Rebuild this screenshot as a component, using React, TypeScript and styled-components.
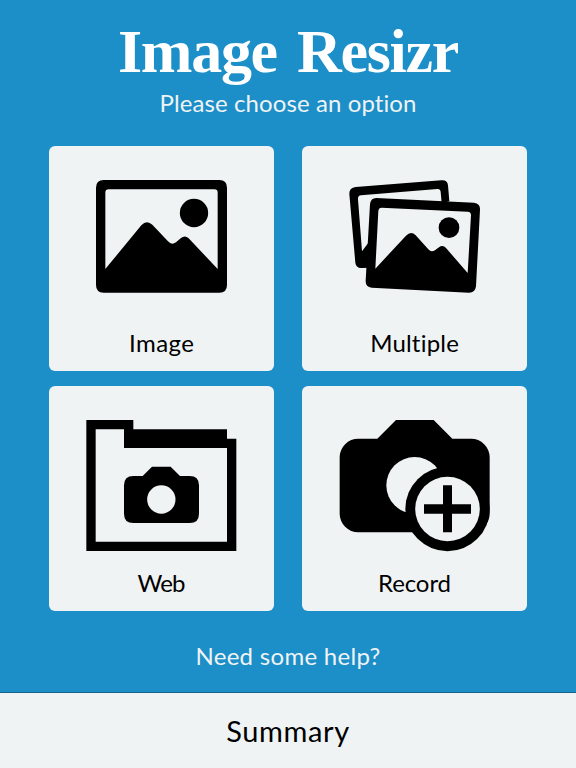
import React from 'react';
import styled, { createGlobalStyle } from 'styled-components';

const GlobalStyle = createGlobalStyle`
  * { box-sizing: border-box; }
  body { margin: 0; background: #1c8ec8; }
`;

const Page = styled.div`
  display: flex;
  flex-direction: column;
  height: 768px;
  overflow: hidden;
  background: #1c8ec8;
  color: #eff3f4;
  font-family: Lato, 'Noto Sans', sans-serif;
  font-weight: 400;
`;

const Header = styled.header`
  height: 146px;
  padding-top: 16px;
  text-align: center;
`;

const Title = styled.h1`
  margin: 0;
  color: #fff;
  font: bold 62px/70px 'Liberation Serif', serif;
  letter-spacing: -1.3px;
  word-spacing: 6px;
  white-space: nowrap;
`;

const Subtitle = styled.p`
  margin: 2px 0 0;
  font-size: 24px;
  line-height: 30px;
  letter-spacing: 0.1px;
`;

const Options = styled.main`
  display: grid;
  grid-template-columns: 225px 225px;
  grid-auto-rows: 225px;
  gap: 15px 28px;
  justify-content: center;
`;

const Tile = styled.button`
  display: flex;
  flex-direction: column;
  align-items: center;
  padding: 34px 0 0;
  border: 0;
  border-radius: 6px;
  background: #eff3f4;
  color: #000;
  font-family: inherit;
  font-weight: inherit;
`;

const Icon = styled.svg`
  display: block;
  flex: none;
  width: 150px;
  height: 131px;
  overflow: visible;
`;

const Label = styled.span<{ $spacing: number }>`
  margin-top: 17px;
  font-size: 24px;
  line-height: 30px;
  letter-spacing: ${(p) => p.$spacing}px;
  margin-right: ${(p) => -p.$spacing}px;
`;

const Help = styled.a`
  margin-top: 30px;
  text-align: center;
  font-size: 24px;
  line-height: 30px;
  letter-spacing: 0.3px;
`;

const Footer = styled.footer`
  height: 76px;
  margin-top: auto;
  border-top: 1px solid #14628b;
  background: #eff3f4;
  color: #000;
  text-align: center;
  font-size: 29px;
  line-height: 75px;
  letter-spacing: 0.6px;
`;

const ImageIcon = () => (
  <Icon viewBox="141 120 450 393">
    <path fillRule="evenodd" d="M191 120H538Q561 120 561 143V435Q561 458 538 458H191Q168 458 168 435V143Q168 120 191 120ZM206 148Q196 148 196 158V387L304 256Q320 238 337 254L384 304Q395 317 408 307L423 294Q435 284 446 295L533 387V158Q533 148 523 148Z" />
    <circle cx="462" cy="219" r="42.5" />
  </Icon>
);

const MultipleIcon = () => (
  <Icon viewBox="132 120 450 393">
    <path fillRule="evenodd" d="M179 141L436 121Q454 119 456 136L460 184L437 190L434 156Q433 146 424 147L195 166Q185 167 186 178L198 334L216 310L232 383L195 384Q180 383 178 368L160 162Q159 144 179 141Z" />
    <path fillRule="evenodd" d="M241 174L534 188Q553 190 552 209L540 439Q538 458 519 458L227 443Q208 441 209 422L222 192Q224 174 241 174ZM257 203Q248 203 247 213L238 386L330 287Q345 271 359 286L397 328Q406 339 418 330L429 322Q440 313 450 324L515 399L525 225Q525 216 515 215Z" />
    <circle cx="459" cy="263" r="31" />
  </Icon>
);

const WebIcon = () => (
  <Icon viewBox="141 120 450 393">
    <path fillRule="evenodd" d="M139 120H280V148H561V176H589V513H139ZM167 148V485H561V204H252V148Z" />
    <path fillRule="evenodd" d="M336 260H392L420 288H449Q477 288 477 316V401Q477 429 449 429H280Q252 429 252 401V316Q252 288 280 288H308ZM364 316A42.5 42.5 0 1 0 364 401A42.5 42.5 0 1 0 364 316Z" />
  </Icon>
);

const RecordIcon = () => (
  <Icon viewBox="132 120 450 393">
    <path d="M300 120H413L469 176H525A56 56 0 0 1 581 232V401A56 56 0 0 1 525 457H187A56 56 0 0 1 131 401V232A56 56 0 0 1 187 176H244Z" />
    <circle cx="356" cy="316" r="85" fill="#eff3f4" />
    <circle cx="454.5" cy="387" r="126.5" />
    <circle cx="454.5" cy="387" r="97" fill="#eff3f4" />
    <path d="M441 316H468V373H525V401H468V457H441V401H384V373H441Z" />
  </Icon>
);

const options = [
  { name: 'Image', Drawing: ImageIcon, spacing: 0.4 },
  { name: 'Multiple', Drawing: MultipleIcon, spacing: 0.2 },
  { name: 'Web', Drawing: WebIcon, spacing: -0.8 },
  { name: 'Record', Drawing: RecordIcon, spacing: -0.1 },
];

export default function App() {
  return (
    <>
      <GlobalStyle />
      <Page>
        <Header>
          <Title>Image Resizr</Title>
          <Subtitle>Please choose an option</Subtitle>
        </Header>
        <Options>
          {options.map(({ name, Drawing, spacing }) => (
            <Tile key={name} type="button">
              <Drawing />
              <Label $spacing={spacing}>{name}</Label>
            </Tile>
          ))}
        </Options>
        <Help>Need some help?</Help>
        <Footer>Summary</Footer>
      </Page>
    </>
  );
}
